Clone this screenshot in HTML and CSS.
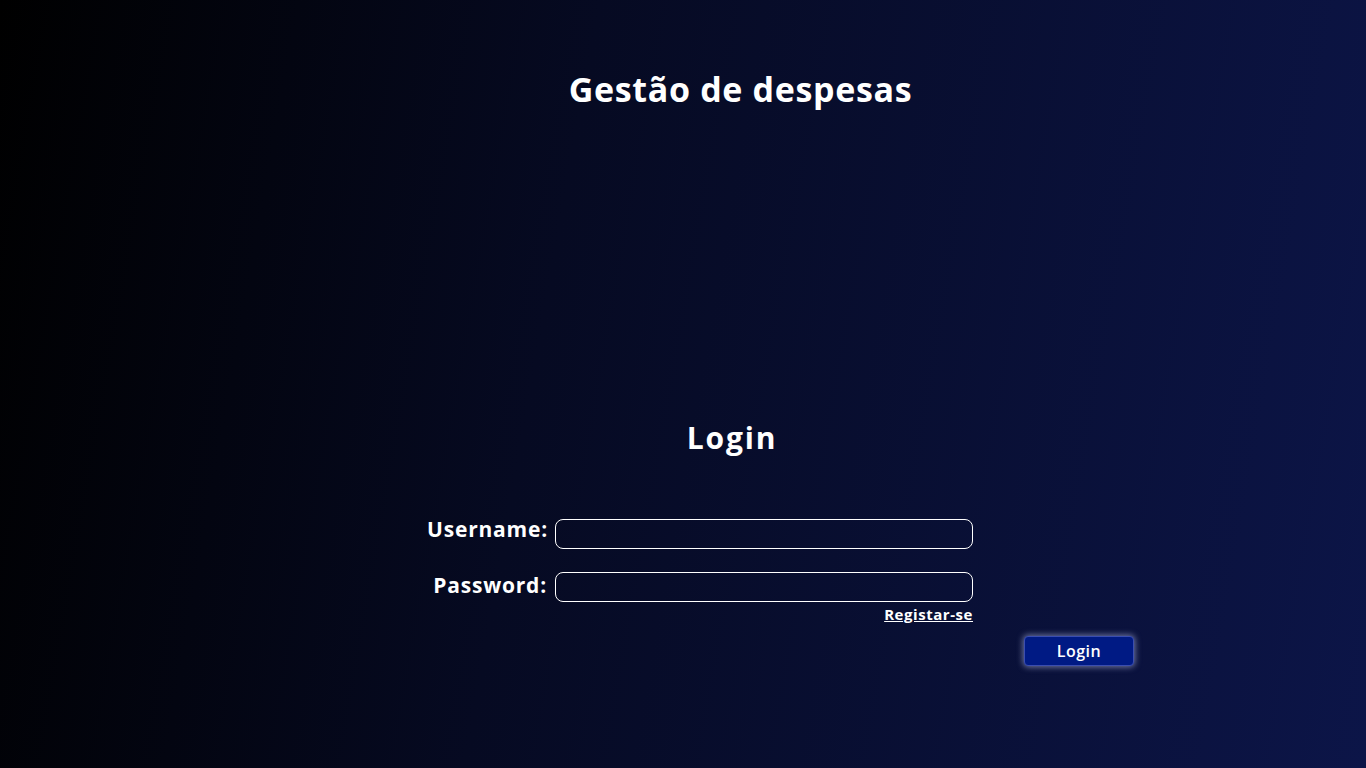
FILE: index.html
```html
<!DOCTYPE html>
<html lang="pt">
<head>
<meta charset="utf-8">
<title>Gestão de despesas</title>
<link rel="stylesheet" href="styles.css">
</head>
<body>
<div class="page">
  <h1 class="title">Gestão de despesas</h1>
  <h2 class="login-title">Login</h2>
  <form class="form">
    <label class="label label-user" for="u">Username:</label>
    <input class="input" id="u" type="text">
    <label class="label label-pass" for="p">Password:</label>
    <input class="input" id="p" type="password">
    <span></span>
    <a class="register" href="#">Registar-se</a>
  </form>
  <div class="actions">
    <button class="btn" type="button">Login</button>
  </div>
</div>
</body>
</html>
```
FILE: styles.css
```css
html, body {
  margin: 0;
  padding: 0;
  height: 100%;
}
body {
  background: linear-gradient(100deg, #000000 0%, #060a22 40%, #0c1548 100%);
  color: #fff;
  font-family: "Open Sans", "Noto Sans", sans-serif;
  overflow: hidden;
}
.page {
  width: 1366px;
  height: 768px;
  display: flex;
  flex-direction: column;
}
.title {
  margin: 65px 0 0 0;
  padding-left: 115px;
  text-align: center;
  font-size: 34px;
  font-weight: 700;
  letter-spacing: 0.65px;
  line-height: 48px;
}
.login-title {
  margin: 305px 0 0 0;
  padding-left: 98px;
  text-align: center;
  font-size: 30px;
  font-weight: 700;
  letter-spacing: 1.8px;
  line-height: 40px;
}
.form {
  margin: 61px 0 0 410px;
  display: grid;
  grid-template-columns: 138px 418px;
  column-gap: 7px;
  row-gap: 23px;
  align-items: center;
}
.label {
  text-align: right;
  font-size: 21px;
  font-weight: 700;
  letter-spacing: 0.8px;
  line-height: 30px;
}
.label-user {
  margin-top: -10px;
}
.label-pass {
  margin-top: -4px;
  padding-right: 1px;
}
.input {
  box-sizing: border-box;
  width: 418px;
  height: 30px;
  margin: 0;
  background: transparent;
  border: 1px solid #ffffff;
  border-radius: 8px;
  color: #fff;
  outline: none;
}
.register {
  justify-self: end;
  margin-top: -22px;
  color: #fff;
  font-size: 15px;
  font-weight: 700;
  letter-spacing: 0.55px;
  line-height: 20px;
  text-decoration: underline;
}
.actions {
  margin: 11px 0 0 1024px;
}
.btn {
  width: 110px;
  height: 30px;
  background: #001a84;
  color: #fff;
  border: 1px solid #3a4db0;
  border-radius: 4px;
  font-family: "Open Sans", sans-serif;
  font-size: 16px;
  font-weight: 600;
  letter-spacing: 0.5px;
  box-shadow: 0 0 6px 1px rgba(200, 210, 255, 0.55);
  cursor: pointer;
}
```
